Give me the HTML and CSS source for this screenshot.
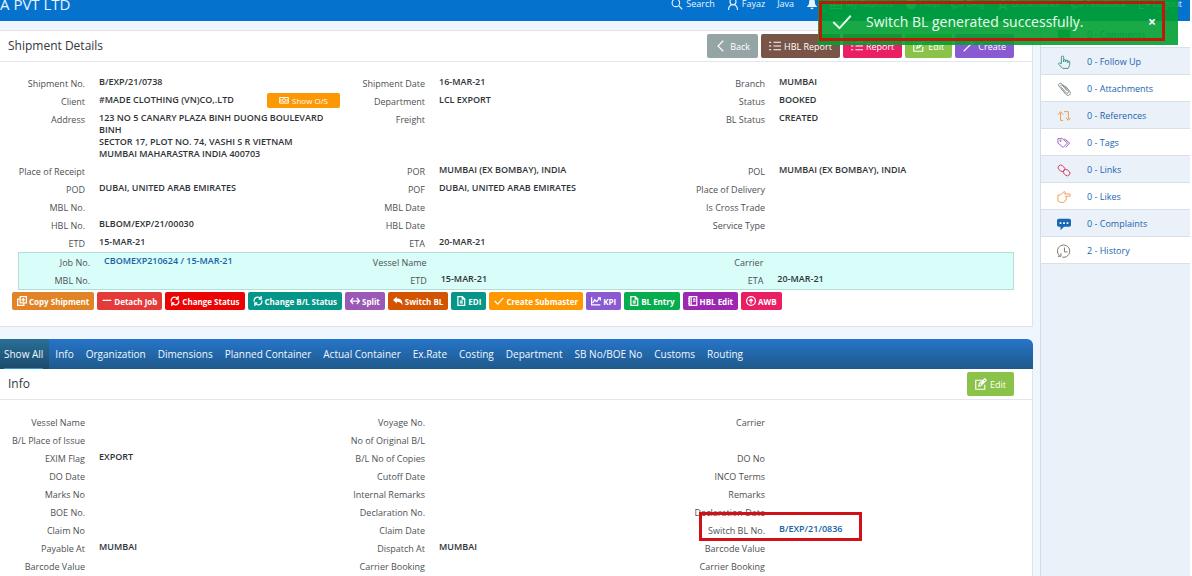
FILE: index.html
```html
<!DOCTYPE html>
<html lang="en">
<head>
<meta charset="utf-8">
<title>Shipment Details</title>
<link rel="stylesheet" href="styles.css">
</head>
<body>
<svg class="sprite" aria-hidden="true">
  <symbol id="search" viewBox="0 0 16 16"><circle cx="6.5" cy="6.5" r="5"/><path d="M10.500 10.500L15 15"/></symbol>
  <symbol id="user" viewBox="0 0 16 16"><circle cx="8" cy="5" r="4"/><path d="M2 16c0-4 2-7 6-7s6 3 6 7"/></symbol>
  <symbol id="bell" viewBox="0 0 16 16"><path class="solid" d="M8 1C4 1 4 5 4 8L1 12h14l-3-4c0-3 0-7-4-7zM6 13a2 2 0 0 0 4 0z"/></symbol>
  <symbol id="table" viewBox="0 0 16 16"><path d="M1 2h14v12H1zM1 6h14M1 10h14M6 2v12"/></symbol>
  <symbol id="help" viewBox="0 0 16 16"><circle class="solid" cx="8" cy="8" r="7"/></symbol>
  <symbol id="chat" viewBox="0 0 16 16"><path d="M1 3h14v8H8l-4 3v-3H1z"/></symbol>
  <symbol id="star" viewBox="0 0 16 16"><path d="M8 1l2 5h5l-4 3 2 6-5-4-5 4 2-6-4-3h5z"/></symbol>
  <symbol id="out" viewBox="0 0 16 16"><path d="M9 2H2v12h7M6 8h9M12 5l3 3-3 3"/></symbol>
  <symbol id="check" viewBox="0 0 16 16"><path d="M1 8l5 5L15 3"/></symbol>
  <symbol id="left" viewBox="0 0 16 16"><path d="M11 1L4 8l7 7"/></symbol>
  <symbol id="list" viewBox="0 0 16 16"><path d="M6 3h10M6 8h10M6 13h10M0 3h3M0 8h3M0 13h3"/></symbol>
  <symbol id="edit" viewBox="0 0 16 16"><path d="M9 3H1v12h12V9M5 11l1-4 7-6 2 2-7 7zM8 8l4-4"/></symbol>
  <symbol id="wand" viewBox="0 0 16 16"><path d="M1 15L11 5M12 1v5M10 3l5 3"/></symbol>
  <symbol id="money" viewBox="0 0 16 16"><path d="M1 4h14v9H1z"/><circle cx="8" cy="8.500" r="2.500"/><path d="M3 6v5M13 6v5"/></symbol>
  <symbol id="copy" viewBox="0 0 16 16"><path d="M5 1h10v10H5zM5 5H1v10h10v-4M10 3v6M7 6h6"/></symbol>
  <symbol id="minus" viewBox="0 0 16 16"><path d="M1 7h14"/></symbol>
  <symbol id="refresh" viewBox="0 0 16 16"><path d="M2 9C1 4 5 1 9 2l4 2M14 7c1 5-3 8-7 7l-4-2M13 0v5H9M3 16v-5h4"/></symbol>
  <symbol id="split" viewBox="0 0 16 16"><path d="M2 8h12M5 3L1 8l4 5M11 3l4 5-4 5"/></symbol>
  <symbol id="reply" viewBox="0 0 16 16"><path class="solid" d="M6 1v3c6 0 10 3 9 11-1-4-4-6-9-6v3L0 6.500z"/></symbol>
  <symbol id="doc" viewBox="0 0 16 16"><path d="M3 1h7l4 4v10H3zM10 1v4h4M6 8h5M6 11h5"/></symbol>
  <symbol id="chart" viewBox="0 0 16 16"><path d="M1 2v12h14M3 11l3-5 3 3 5-6M11 3h4v4"/></symbol>
  <symbol id="book" viewBox="0 0 16 16"><path d="M2 1h12v14H2zM5 1v14M8 5h4M8 8h4M0 4h3M0 8h3M0 12h3"/></symbol>
  <symbol id="up" viewBox="0 0 16 16"><circle cx="8" cy="8" r="7"/><path d="M8 12V5M5 8l3-3 3 3"/></symbol>
  <symbol id="comment" viewBox="0 0 16 16"><path class="solid" d="M2 2h12a1 1 0 0 1 1 1v8H8l-4 4v-4H1V3a1 1 0 0 1 1-1z"/></symbol>
  <symbol id="hand" viewBox="0 0 16 16"><path d="M5 10V2.500a1.300 1.300 0 0 1 2.600 0V8V6.500a1.200 1.200 0 0 1 2.400 0V8V7a1.200 1.200 0 0 1 2.400 0V9V8a1.100 1.100 0 0 1 2.200 0c0 4-.600 5-1.800 7.300H6.500L2 10.800c-1-1.300.700-2.300 1.600-1.500z"/></symbol>
  <symbol id="clip" viewBox="0 0 16 16"><path d="M5 6l5 6c2 2 4 0 2.700-2L6 2.500C3.500 0 .5 2.500 2.500 5l7.500 9c3 3 7 0 4.500-3.500L9 4M4 5c0-1.500 1.500-2 2.500-.8l5 5.800"/></symbol>
  <symbol id="retweet" viewBox="0 0 16 16"><path d="M7 13H4V4M1 6.500L4 3l3 3.500M8 3h5v9M10 10l3 3 2.500-3"/></symbol>
  <symbol id="tags" viewBox="0 0 16 16"><path d="M1 3h5l6 5-5 5-6-5zM8 3l6.500 5L10 13"/><circle cx="4" cy="5.500" r=".8"/></symbol>
  <symbol id="link" viewBox="0 0 16 16"><rect x="1" y="3" width="8" height="6" rx="3" transform="rotate(40 5 6)"/><rect x="7" y="8" width="8" height="6" rx="3" transform="rotate(40 11 11)"/></symbol>
  <symbol id="point" viewBox="0 0 16 16"><path d="M1 6l3-.5L8 2c1.500-.5 1.800 1 .5 2.500H14a1.300 1.300 0 0 1 0 2.600H10v1c1.500.5 1 2 0 2 .8 1 0 2-1 2 .3 1.500-1 2-2 2H4l-3-1.600z"/></symbol>
  <symbol id="dots" viewBox="0 0 16 16"><path class="solid" d="M2 2h12q2 0 2 2v5q0 2-2 2H8l-4 4v-4H2q-2 0-2-2V4q0-2 2-2z"/><path class="dot" d="M3 6h2v2H3zM7 6h2v2H7zM11 6h2v2h-2z"/></symbol>
  <symbol id="history" viewBox="0 0 16 16"><path d="M3 13.500A7 7 0 1 1 6 15M8.500 4v5H12M4.500 10.500V14H1"/></symbol>
</svg>

<header class="topbar">
  <span class="company">A PVT LTD</span>
  <nav class="topnav" aria-label="Account">
    <a href="#"><svg class="icon"><use href="#search"/></svg>Search</a>
    <a href="#"><svg class="icon"><use href="#user"/></svg>Fayaz</a>
    <a href="#">Java</a>
    <a href="#" aria-label="Notifications"><svg class="icon"><use href="#bell"/></svg></a>
    <a href="#"><svg class="icon"><use href="#table"/></svg>My Reports</a>
    <a href="#"><svg class="icon"><use href="#help"/></svg>Help</a>
    <a href="#"><svg class="icon"><use href="#chat"/></svg>Blog</a>
    <a href="#"><svg class="icon"><use href="#star"/></svg>Bookmarks</a>
    <a href="#"><svg class="icon"><use href="#chat"/></svg>Feedback</a>
    <a href="#"><svg class="icon"><use href="#out"/></svg>Logout</a>
  </nav>
</header>

<div class="page">
  <main class="content">
    <section class="card">
      <div class="card-head">
        <h1>Shipment Details</h1>
        <div class="actions">
          <button class="btn grey" type="button"><svg class="icon"><use href="#left"/></svg>Back</button>
          <button class="btn brown" type="button"><svg class="icon"><use href="#list"/></svg>HBL Report</button>
          <button class="btn pink" type="button"><svg class="icon"><use href="#list"/></svg>Report</button>
          <button class="btn lime" type="button"><svg class="icon"><use href="#edit"/></svg>Edit</button>
          <button class="btn violet" type="button"><svg class="icon"><use href="#wand"/></svg>Create</button>
        </div>
      </div>
      <dl class="fields">
        <div><dt>Shipment No.</dt><dd>B/EXP/21/0738</dd></div>
        <div><dt>Shipment Date</dt><dd>16-MAR-21</dd></div>
        <div><dt>Branch</dt><dd>MUMBAI</dd></div>
        <div><dt>Client</dt><dd class="client">#MADE CLOTHING (VN)CO,.LTD <button class="mini" type="button"><svg class="icon"><use href="#money"/></svg>Show O/S</button></dd></div>
        <div><dt>Department</dt><dd>LCL EXPORT</dd></div>
        <div><dt>Status</dt><dd>BOOKED</dd></div>
        <div><dt>Address</dt><dd>123 NO 5 CANARY PLAZA BINH DUONG BOULEVARD BINH<br>SECTOR 17, PLOT NO. 74, VASHI S R VIETNAM<br>MUMBAI MAHARASTRA INDIA 400703</dd></div>
        <div><dt>Freight</dt><dd></dd></div>
        <div><dt>BL Status</dt><dd>CREATED</dd></div>
        <div><dt>Place of Receipt</dt><dd></dd></div>
        <div><dt>POR</dt><dd>MUMBAI (EX BOMBAY), INDIA</dd></div>
        <div><dt>POL</dt><dd>MUMBAI (EX BOMBAY), INDIA</dd></div>
        <div><dt>POD</dt><dd>DUBAI, UNITED ARAB EMIRATES</dd></div>
        <div><dt>POF</dt><dd>DUBAI, UNITED ARAB EMIRATES</dd></div>
        <div><dt>Place of Delivery</dt><dd></dd></div>
        <div><dt>MBL No.</dt><dd></dd></div>
        <div><dt>MBL Date</dt><dd></dd></div>
        <div><dt>Is Cross Trade</dt><dd></dd></div>
        <div><dt>HBL No.</dt><dd>BLBOM/EXP/21/00030</dd></div>
        <div><dt>HBL Date</dt><dd></dd></div>
        <div><dt>Service Type</dt><dd></dd></div>
        <div><dt>ETD</dt><dd>15-MAR-21</dd></div>
        <div><dt>ETA</dt><dd>20-MAR-21</dd></div>
      </dl>
      <dl class="fields job">
        <div><dt>Job No.</dt><dd><a href="#">CBOMEXP210624 / 15-MAR-21</a></dd></div>
        <div><dt>Vessel Name</dt><dd></dd></div>
        <div><dt>Carrier</dt><dd></dd></div>
        <div><dt>MBL No.</dt><dd></dd></div>
        <div><dt>ETD</dt><dd>15-MAR-21</dd></div>
        <div><dt>ETA</dt><dd>20-MAR-21</dd></div>
      </dl>
      <div class="toolbar">
        <button class="tool orange" type="button"><svg class="icon"><use href="#copy"/></svg>Copy Shipment</button>
        <button class="tool coral" type="button"><svg class="icon"><use href="#minus"/></svg>Detach Job</button>
        <button class="tool red" type="button"><svg class="icon"><use href="#refresh"/></svg>Change Status</button>
        <button class="tool teal" type="button"><svg class="icon"><use href="#refresh"/></svg>Change B/L Status</button>
        <button class="tool purple" type="button"><svg class="icon"><use href="#split"/></svg>Split</button>
        <button class="tool rust" type="button"><svg class="icon"><use href="#reply"/></svg>Switch BL</button>
        <button class="tool teal" type="button"><svg class="icon"><use href="#doc"/></svg>EDI</button>
        <button class="tool amber" type="button"><svg class="icon"><use href="#check"/></svg>Create Submaster</button>
        <button class="tool violet" type="button"><svg class="icon"><use href="#chart"/></svg>KPI</button>
        <button class="tool green" type="button"><svg class="icon"><use href="#doc"/></svg>BL Entry</button>
        <button class="tool plum" type="button"><svg class="icon"><use href="#book"/></svg>HBL Edit</button>
        <button class="tool pink" type="button"><svg class="icon"><use href="#up"/></svg>AWB</button>
      </div>
    </section>

    <nav class="tabs" aria-label="Shipment sections">
      <a class="active" href="#"><span>Show All</span></a>
      <a href="#">Info</a>
      <a href="#">Organization</a>
      <a href="#">Dimensions</a>
      <a href="#">Planned Container</a>
      <a href="#">Actual Container</a>
      <a href="#">Ex.Rate</a>
      <a href="#">Costing</a>
      <a href="#">Department</a>
      <a href="#">SB No/BOE No</a>
      <a href="#">Customs</a>
      <a href="#">Routing</a>
    </nav>
    <section class="card info">
      <div class="card-head">
        <h2>Info</h2>
        <div class="actions">
          <button class="btn lime" type="button"><svg class="icon"><use href="#edit"/></svg>Edit</button>
        </div>
      </div>
      <dl class="fields">
        <div><dt>Vessel Name</dt><dd></dd></div>
        <div><dt>Voyage No.</dt><dd></dd></div>
        <div><dt>Carrier</dt><dd></dd></div>
        <div><dt>B/L Place of Issue</dt><dd></dd></div>
        <div><dt>No of Original B/L</dt><dd></dd></div>
        <div></div>
        <div><dt>EXIM Flag</dt><dd>EXPORT</dd></div>
        <div><dt>B/L No of Copies</dt><dd></dd></div>
        <div><dt>DO No</dt><dd></dd></div>
        <div><dt>DO Date</dt><dd></dd></div>
        <div><dt>Cutoff Date</dt><dd></dd></div>
        <div><dt>INCO Terms</dt><dd></dd></div>
        <div><dt>Marks No</dt><dd></dd></div>
        <div><dt>Internal Remarks</dt><dd></dd></div>
        <div><dt>Remarks</dt><dd></dd></div>
        <div><dt>BOE No.</dt><dd></dd></div>
        <div><dt>Declaration No.</dt><dd></dd></div>
        <div><dt>Declaration Date</dt><dd></dd></div>
        <div><dt>Claim No</dt><dd></dd></div>
        <div><dt>Claim Date</dt><dd></dd></div>
        <div class="marked"><dt>Switch BL No.</dt><dd><a href="#">B/EXP/21/0836</a></dd></div>
        <div><dt>Payable At</dt><dd>MUMBAI</dd></div>
        <div><dt>Dispatch At</dt><dd>MUMBAI</dd></div>
        <div><dt>Barcode Value</dt><dd></dd></div>
        <div><dt>Barcode Value</dt><dd></dd></div>
        <div><dt>Carrier Booking</dt><dd></dd></div>
        <div><dt>Carrier Booking</dt><dd></dd></div>
      </dl>
    </section>
  </main>

  <aside class="side">
    <a href="#"><svg class="icon c-green"><use href="#comment"/></svg>0 - Comments</a>
    <a href="#"><svg class="icon c-green"><use href="#hand"/></svg>0 - Follow Up</a>
    <a href="#"><svg class="icon c-slate"><use href="#clip"/></svg>0 - Attachments</a>
    <a href="#"><svg class="icon c-orange"><use href="#retweet"/></svg>0 - References</a>
    <a href="#"><svg class="icon c-purple"><use href="#tags"/></svg>0 - Tags</a>
    <a href="#"><svg class="icon c-red"><use href="#link"/></svg>0 - Links</a>
    <a href="#"><svg class="icon c-orange"><use href="#point"/></svg>0 - Likes</a>
    <a href="#"><svg class="icon c-blue"><use href="#dots"/></svg>0 - Complaints</a>
    <a href="#"><svg class="icon c-brown"><use href="#history"/></svg>2 - History</a>
  </aside>
</div>

<div class="toast" role="status">
  <svg class="icon"><use href="#check"/></svg>
  <span>Switch BL generated successfully.</span>
  <button class="close" type="button" aria-label="Close">×</button>
</div>
</body>
</html>
```
FILE: styles.css
```css
* { box-sizing: border-box; }

body {
  margin: 0;
  height: 100vh;
  overflow: hidden;
  display: flex;
  flex-direction: column;
  padding-right: 2px;
  background: #fff;
  color: #3c3f44;
  font: 9px/12px "Open Sans", "Noto Sans", sans-serif;
}

h1, h2, dl, dd { margin: 0; }
a { color: inherit; text-decoration: none; }
button { border: 0; font-family: inherit; color: #fff; cursor: pointer; }

.sprite { position: absolute; width: 0; height: 0; }
.icon {
  flex: none;
  width: 12px;
  height: 12px;
  fill: none;
  stroke: currentColor;
  stroke-width: 1.5;
}
.solid { fill: currentColor; stroke: none; }
.dot { fill: #fff; stroke: none; }

.topbar {
  flex: none;
  display: flex;
  justify-content: space-between;
  height: 21px;
  padding-right: 8px;
  background: #0573ce;
  color: #e6f3ff;
  line-height: 8px;
}
.company { font-size: 15px; }
.topnav { display: flex; gap: 12px; font-size: 9px; }
.topnav a { display: flex; gap: 3px; height: 8px; align-items: center; }

.page { flex: 1; min-height: 0; display: flex; background: #f0f6fd; }
.content { flex: 1; min-width: 0; padding: 9px 7px 0 0; }
.side {
  flex: none;
  width: 150px;
  background: #eaf1f9;
  border-left: 1px solid #d3dce8;
}
.side a {
  display: flex;
  align-items: center;
  gap: 16px;
  height: 27px;
  padding: 1px 0 0 16px;
  border-bottom: 1px solid #d9e0e8;
  color: #1c64ad;
  font-size: 9px;
}
.side a:nth-child(odd) { background: #fff; }
.side .icon { width: 14px; height: 14px; stroke-width: 1; }
.c-green { color: #2d8f79; }
.c-slate { color: #6b7c7c; }
.c-orange { color: #f0913a; }
.c-purple { color: #9255b0; }
.c-red { color: #d9365e; }
.c-blue { color: #1767b5; }
.c-brown { color: #6e655e; }

.card { background: #fff; border: 1px solid #e0e4ea; border-left: 0; padding-bottom: 16px; }
.card-head {
  display: flex;
  align-items: center;
  justify-content: space-between;
  height: 31px;
  padding: 0 18px 0 8px;
  border-bottom: 1px solid #e4e7ea;
}
.card-head h1, .card-head h2 { font-size: 12px; line-height: 16px; font-weight: 400; color: #333740; }
.actions { display: flex; gap: 3px; }
.btn {
  display: flex;
  align-items: center;
  gap: 3px;
  height: 24px;
  padding: 0 8px;
  border-radius: 2px;
  font-size: 9px;
}

.fields {
  display: grid;
  grid-template-columns: repeat(3, 1fr);
  padding: 12px 12px 0 0;
}
.fields > div { display: flex; gap: 14px; min-height: 18px; }
.fields dt { flex: none; width: 25%; padding-top: 4px; text-align: right; white-space: nowrap; color: #4d5054; }
.fields dd { flex: 1; padding: 2px 0; font-weight: 600; color: #2f3338; }
.fields dd a { color: #1763a6; }
.fields .client {
  display: flex;
  justify-content: space-between;
  align-items: center;
  height: 18px;
  padding: 0 0 2px;
}
.mini {
  display: flex;
  align-items: center;
  gap: 3px;
  height: 15px;
  padding: 0 12px;
  border-radius: 2px;
  background: #fc9803;
  font-size: 8px;
}
.mini .icon { width: 10px; height: 10px; }

.job {
  grid-template-columns: 21fr 21fr 20fr;
  margin: 0 18px;
  padding: 0;
  background: #d9fdf8;
  border: 1px solid #b5ded9;
}
.job dt { width: 71px; }
.toolbar { display: flex; flex-wrap: wrap; gap: 3px; padding: 2px 12px 0; }
.tool {
  display: flex;
  align-items: center;
  gap: 2px;
  height: 18px;
  padding: 0 5px;
  border-radius: 2px;
  font-size: 8px;
  font-weight: 700;
}
.tool .icon { width: 10px; height: 10px; stroke-width: 2; }

.grey { background: #95a5a6; }
.brown { background: #795548; }
.pink { background: #e91e63; }
.lime { background: #8bc34a; }
.violet { background: #8a5ad2; }
.orange { background: #e08427; }
.coral { background: #e53a3a; }
.red { background: #ec0303; }
.teal { background: #049688; }
.purple { background: #9b59b6; }
.rust { background: #d35400; }
.amber { background: #ff9800; }
.green { background: #05ad4e; }
.plum { background: #9c27b0; }

.tabs {
  display: flex;
  height: 30px;
  margin-top: 12px;
  border-radius: 0 6px 0 0;
  background: linear-gradient(#2674ca, #1f5a8a);
  color: #f2f8ff;
  font-size: 10px;
  line-height: 30px;
}
.tabs a { padding: 0 6px; white-space: nowrap; }
.tabs .active { padding-left: 4px; background: linear-gradient(#2a6f97, #1a4a6b); }
.tabs .active span { display: block; height: 30px; border-bottom: 1px solid #2b93d8; }

.info { border-top: 0; }
.info .fields { padding-top: 13px; }
.marked { position: relative; }
.marked::after {
  content: "";
  position: absolute;
  inset: -9px 158px -2px 19px;
  border: 3px solid #d01118;
}

.toast {
  position: absolute;
  top: 0;
  right: 14px;
  display: flex;
  align-items: center;
  gap: 14px;
  width: 360px;
  height: 45px;
  padding: 0 18px 2px 14px;
  background: rgb(0 160 50 / 90%);
  color: #e8ffee;
  font-size: 14px;
}
.toast::after {
  content: "";
  position: absolute;
  inset: 1px 13px 4px 1px;
  border: 3px solid #c21807;
  pointer-events: none;
}
.toast .icon { width: 20px; height: 20px; }
.close { margin-left: auto; padding: 0 4px; background: none; font-size: 14px; font-weight: 700; line-height: 14px; }
```
